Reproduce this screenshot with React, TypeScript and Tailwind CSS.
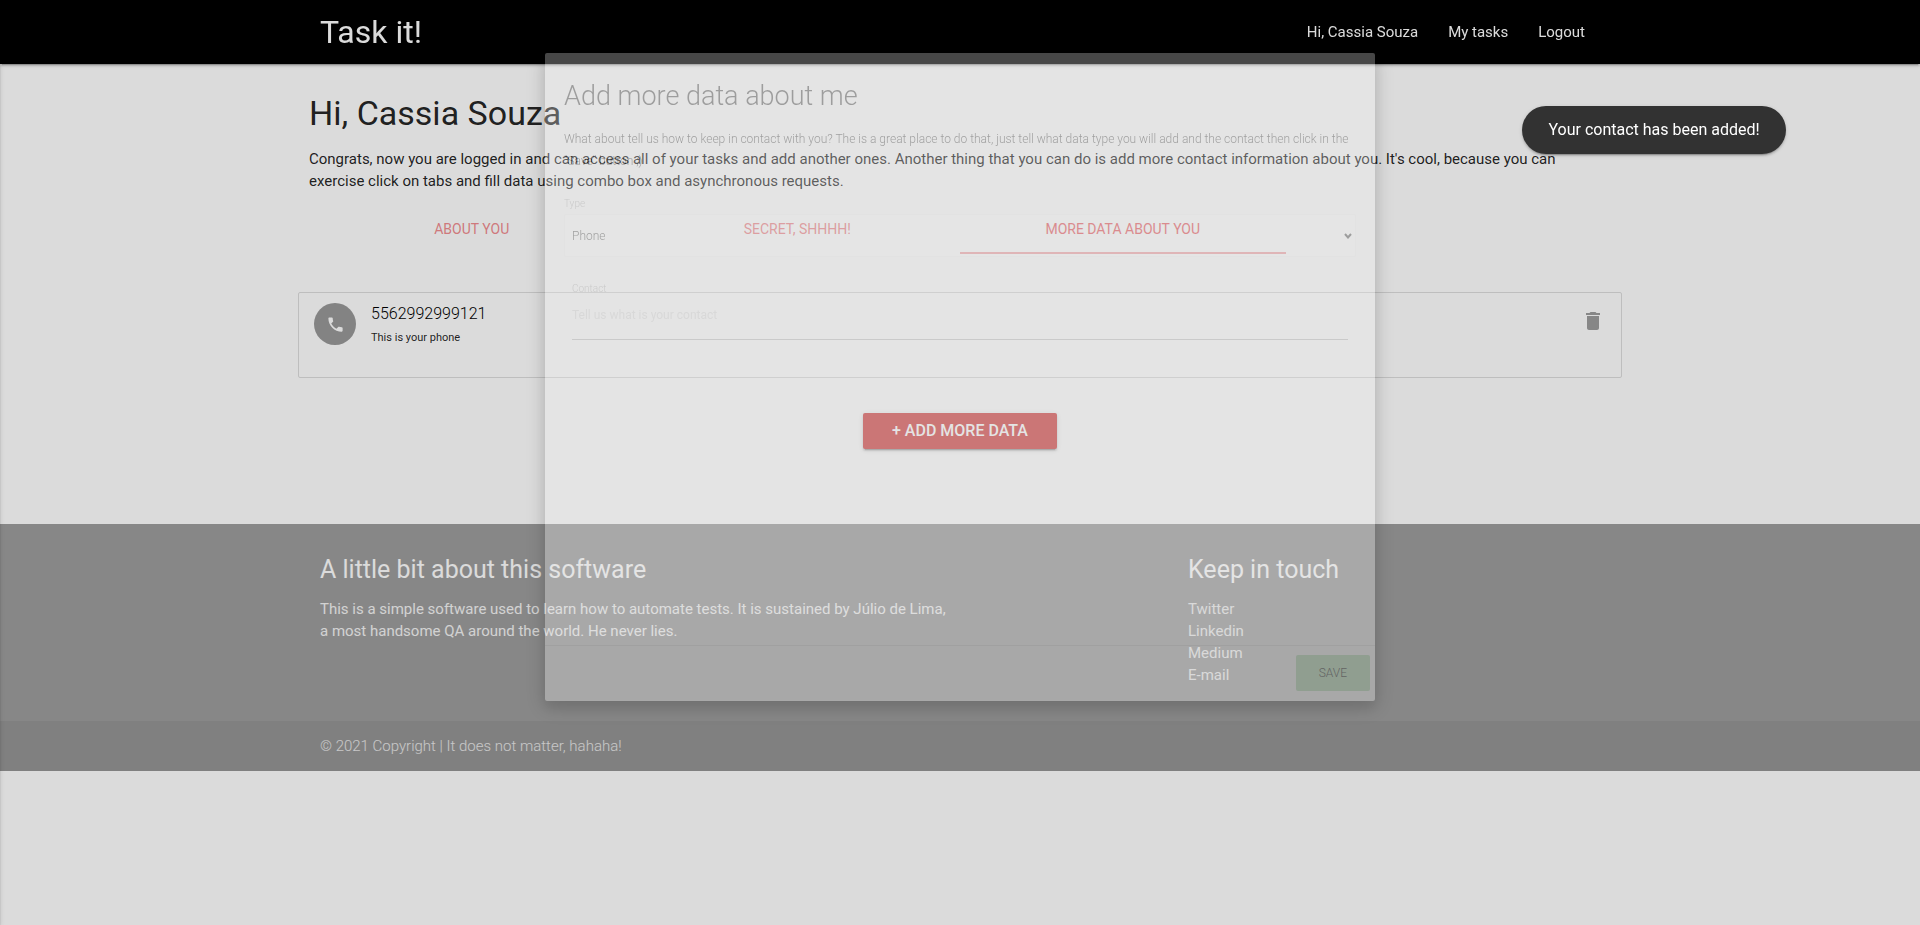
import { MdDelete, MdPhone } from "react-icons/md";

const navLinks = ["Hi, Cassia Souza", "My tasks", "Logout"];
const tabs = ["About you", "Secret, shhhh!", "More data about you"];
const social = ["Twitter", "Linkedin", "Medium", "E-mail"];

function Header() {
  return (
    <nav className="relative h-16 bg-black text-white shadow-[0_2px_2px_0_rgba(0,0,0,0.14),0_1px_5px_0_rgba(0,0,0,0.12),0_3px_1px_-2px_rgba(0,0,0,0.2)]">
      <div className="mx-auto flex h-full max-w-[1280px] items-center justify-between">
        <a href="#" className="text-[32px] leading-none">
          Task it!
        </a>
        <ul className="flex">
          {navLinks.map((label) => (
            <li key={label}>
              <a href="#" className="block px-[15px] leading-[64px]">
                {label}
              </a>
            </li>
          ))}
        </ul>
      </div>
    </nav>
  );
}

function Tabs() {
  return (
    <ul className="mt-[14px] grid grid-cols-4 text-center text-sm leading-[46px] uppercase">
      {tabs.map((label, i) => (
        <li
          key={label}
          className={i === 2 ? "border-b-2 border-[#f6b2b5] text-[#ee6e73]" : "border-b-2 border-transparent text-[#ee6e73]/80"}
        >
          <a href="#" className="block">
            {label}
          </a>
        </li>
      ))}
    </ul>
  );
}

function ContactList() {
  return (
    <ul className="-mx-[11px] mt-[38px] rounded-xs border border-[#dedede]">
      <li className="flex min-h-[84px] items-start pt-[10px] pr-4 pl-[15px]">
        <span className="flex size-[42px] items-center justify-center rounded-full bg-[#999999] text-white">
          <MdPhone size={19} />
        </span>
        <div className="ml-[15px] grow">
          <p className="text-base leading-[22px] font-light text-black">5562992999121</p>
          <p className="mt-[2px] text-[11px] leading-[22px]">This is your phone</p>
        </div>
        <button aria-label="Delete contact" className="mt-[6px] text-[#9e9e9e]">
          <MdDelete size={24} />
        </button>
      </li>
    </ul>
  );
}

function Footer() {
  return (
    <footer className="mt-[75px] bg-[#9e9e9e] pt-5 text-white">
      <div className="mx-auto grid min-h-[177px] max-w-[1280px] grid-cols-12 gap-x-[22px]">
        <div className="col-span-6">
          <h5 className="mt-3 text-[25px] leading-[28px]">A little bit about this software</h5>
          <p className="mt-[14px] text-[#f5f5f5]">
            This is a simple software used to learn how to automate tests. It is sustained by Júlio de Lima, a most
            handsome QA around the world. He never lies.
          </p>
        </div>
        <div className="col-span-4 col-start-9">
          <h5 className="mt-3 text-[25px] leading-[28px]">Keep in touch</h5>
          <ul className="mt-[14px] text-[#eeeeee]">
            {social.map((label) => (
              <li key={label}>
                <a href="#">{label}</a>
              </li>
            ))}
          </ul>
        </div>
      </div>
      <div className="bg-[#333333]/8 font-light">
        <p className="mx-auto max-w-[1280px] leading-[50px] text-white/80">
          © 2021 Copyright | It does not matter, hahaha!
        </p>
      </div>
    </footer>
  );
}

function ContactModal() {
  return (
    <div className="fixed inset-x-0 top-[53px] flex justify-center">
      <form className="flex h-[70vh] w-[830px] max-w-full flex-col rounded-xs bg-[#fafafa] font-light text-black opacity-[0.284] shadow-[0_8px_10px_1px_rgba(0,0,0,0.14),0_3px_14px_2px_rgba(0,0,0,0.12),0_5px_20px_0_rgba(0,0,0,0.6)]">
        <div className="grow px-[19px] pt-6">
          <h4 className="text-[27px] leading-[38px]">Add more data about me</h4>
          <p className="mt-[13px] text-[12px] leading-[22px]">
            What about tell us how to keep in contact with you? The is a great place to do that, just tell what data
            type you will add and the contact then click in the &quot;Save&quot; button ;)
          </p>
          <label htmlFor="type" className="mt-[22px] block text-[10px] leading-5 text-[#9e9e9e]">
            Type
          </label>
          <div className="relative">
            <select
              id="type"
              className="block h-[43px] w-full appearance-none rounded-xs border border-[#f2f2f2] bg-white/90 px-[7px] text-[12px]"
            >
              <option>Phone</option>
            </select>
            <svg viewBox="0 0 8 6" className="absolute top-[19px] right-1 h-[6px] w-2" fill="none" stroke="black" strokeWidth="2">
              <path d="M1 1l3 3.5L7 1" />
            </svg>
          </div>
          <div className="mx-2 mt-[22px]">
            <label htmlFor="contact" className="block text-[10px] leading-5 text-[#9e9e9e]">
              Contact
            </label>
            <input
              id="contact"
              placeholder="Tell us what is your contact"
              className="block h-[41px] w-full border-b border-[#9e9e9e] pb-2 text-[12px] font-normal outline-none placeholder:text-[#d1d1d1]"
            />
          </div>
        </div>
        <div className="flex h-14 items-start justify-end border-t border-black/10 px-[5px] pt-[9px]">
          <button className="h-9 rounded-xs bg-[#a5d6a7] px-[23px] text-[12px] uppercase">Save</button>
        </div>
      </form>
    </div>
  );
}

export default function App() {
  return (
    <div className="min-h-screen overflow-hidden bg-white font-['Roboto',sans-serif] text-[15px] leading-[22px] text-black/87">
      <div className="fixed inset-y-0 left-0 w-[300px] -translate-x-full shadow-[0_2px_2px_0_rgba(0,0,0,0.14),0_1px_5px_0_rgba(0,0,0,0.12),0_3px_1px_-2px_rgba(0,0,0,0.2)]" />
      <Header />
      <main className="mx-auto max-w-[1302px] pt-[30px]">
        <h4 className="text-[34px] leading-[38px]">Hi, Cassia Souza</h4>
        <p className="mt-4 pr-6">
          Congrats, now you are logged in and can access all of your tasks and add another ones. Another thing that you
          can do is add more contact information about you. It&#39;s cool, because you can exercise click on tabs and
          fill data using combo box and asynchronous requests.
        </p>
        <Tabs />
        <ContactList />
        <div className="mt-[35px] flex justify-center">
          <button className="h-9 rounded-xs bg-[#d84d4d] px-[29px] text-base font-medium text-white uppercase shadow-[0_2px_2px_0_rgba(0,0,0,0.14),0_1px_5px_0_rgba(0,0,0,0.12),0_3px_1px_-2px_rgba(0,0,0,0.2)]">
            + Add more data
          </button>
        </div>
      </main>
      <Footer />
      <div className="fixed inset-0 bg-black/14" />
      <ContactModal />
      <div
        role="status"
        className="fixed top-[106px] right-[7%] rounded-full bg-[#323232] px-[26px] text-base leading-[48px] text-white shadow-[0_2px_2px_0_rgba(0,0,0,0.14),0_1px_5px_0_rgba(0,0,0,0.12),0_3px_1px_-2px_rgba(0,0,0,0.2)]"
      >
        Your contact has been added!
      </div>
    </div>
  );
}
